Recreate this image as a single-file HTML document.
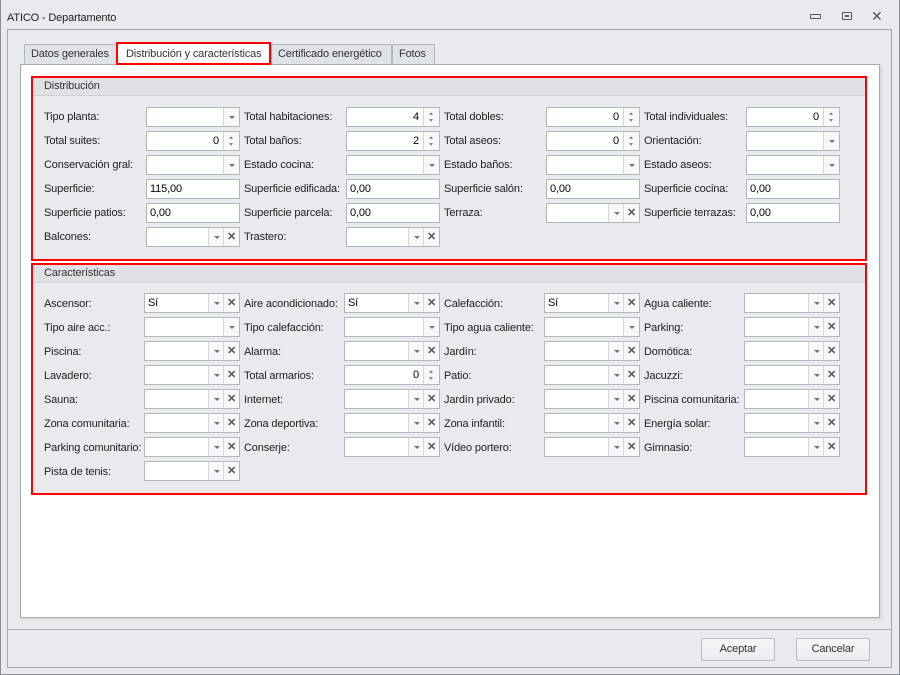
<!DOCTYPE html><html><head><meta charset="utf-8"><style>
*{box-sizing:border-box;margin:0;padding:0}
body{width:900px;height:675px;position:relative;background:#e8eaee;font-family:"Liberation Sans",Tahoma,sans-serif;font-size:11px;letter-spacing:-0.15px;color:#222;overflow:hidden}
.a{position:absolute}
.win{left:0;top:0;width:900px;height:675px;border:1px solid #8a8e94;border-top:0}
.l{position:absolute;white-space:nowrap;line-height:14px}
.f{position:absolute;height:20px;border:1px solid #b3b6bb;background:#fff;width:94px}
.v{position:absolute;left:0;top:0;line-height:18px;padding:0 3px;font-size:11px;color:#000}
.r{right:17px;left:auto;text-align:right}
.b{position:absolute;top:0;height:18px;width:16px;border-left:1px solid #d5d7db;background:#f7f8f9}
.dn::after{content:"";position:absolute;left:5px;top:8px;border-left:3px solid transparent;border-right:3px solid transparent;border-top:3px solid #777}
.sp::before{content:"";position:absolute;left:5px;top:4px;border-left:2.5px solid transparent;border-right:2.5px solid transparent;border-bottom:3px solid #888}
.sp::after{content:"";position:absolute;left:5px;top:11px;border-left:2.5px solid transparent;border-right:2.5px solid transparent;border-top:3px solid #888}
.x{font-size:11px;font-weight:bold;font-style:normal;color:#555;text-align:center;line-height:18px}
.grp{position:absolute;left:31px;width:836px;border:2px solid #f00;background:#e8eaee}
.gh{height:18px;background:#dfe1e5;border-bottom:1px solid #cfd2d6;padding-left:11px;line-height:17px;color:#333}
.tab{position:absolute;top:44px;height:20px;border:1px solid #b3b6bb;border-bottom:0;background:#dfe2e7;line-height:19px;padding:0 6px;color:#333;white-space:nowrap;overflow:hidden}
.btn{position:absolute;top:638px;width:74px;height:23px;border:1px solid #b9bcc1;border-radius:2px;background:linear-gradient(#f6f7f8,#e9ebee);text-align:center;line-height:21px;color:#333}
</style></head><body>
<div class="a win"></div>
<div class="l" style="left:7px;top:11px;color:#222">ATICO - Departamento</div>
<div class="a" style="left:810px;top:14px;width:11px;height:5px;border:1px solid #555;border-radius:1px"></div>
<div class="a" style="left:842px;top:12px;width:10px;height:8px;border:1px solid #555;border-radius:1px"><div class="a" style="left:2px;top:2px;width:4px;height:2px;border:1px solid #555"></div></div>
<div class="a" style="left:871px;top:8px;font-size:14px;color:#555">✕</div>
<div class="a" style="left:7px;top:29px;width:885px;height:639px;border:1px solid #a3a7ad"></div>
<div class="a" style="left:8px;top:629px;width:883px;height:1px;background:#a9adb3"></div>
<div class="a" style="left:20px;top:64px;width:860px;height:554px;background:#fff;border:1px solid #a7abb1;box-shadow:2px 2px 3px rgba(0,0,0,.08)"></div>
<div class="tab" style="left:24px;width:93px">Datos generales</div>
<div class="tab" style="left:116px;top:42px;height:23px;width:155px;background:#fff;border:2px solid #f00;line-height:20px;padding:0 8px">Distribución y características</div>
<div class="tab" style="left:271px;width:121px">Certificado energético</div>
<div class="tab" style="left:392px;width:43px">Fotos</div>

<div class="grp" style="top:76px;height:185px"><div class="gh">Distribución</div></div>
<div class="grp" style="top:263px;height:232px"><div class="gh">Características</div></div>

<div class="l" style="left:44px;top:110px">Tipo planta:</div>
<div class="f" style="left:146px;top:107px"><i class="b dn" style="right:0"></i></div>
<div class="l" style="left:244px;top:110px">Total habitaciones:</div>
<div class="f" style="left:346px;top:107px"><span class="v r">4</span><i class="b sp" style="right:0"></i></div>
<div class="l" style="left:444px;top:110px">Total dobles:</div>
<div class="f" style="left:546px;top:107px"><span class="v r">0</span><i class="b sp" style="right:0"></i></div>
<div class="l" style="left:644px;top:110px">Total individuales:</div>
<div class="f" style="left:746px;top:107px"><span class="v r">0</span><i class="b sp" style="right:0"></i></div>

<div class="l" style="left:44px;top:134px">Total suites:</div>
<div class="f" style="left:146px;top:131px"><span class="v r">0</span><i class="b sp" style="right:0"></i></div>
<div class="l" style="left:244px;top:134px">Total baños:</div>
<div class="f" style="left:346px;top:131px"><span class="v r">2</span><i class="b sp" style="right:0"></i></div>
<div class="l" style="left:444px;top:134px">Total aseos:</div>
<div class="f" style="left:546px;top:131px"><span class="v r">0</span><i class="b sp" style="right:0"></i></div>
<div class="l" style="left:644px;top:134px">Orientación:</div>
<div class="f" style="left:746px;top:131px"><i class="b dn" style="right:0"></i></div>

<div class="l" style="left:44px;top:158px">Conservación gral:</div>
<div class="f" style="left:146px;top:155px"><i class="b dn" style="right:0"></i></div>
<div class="l" style="left:244px;top:158px">Estado cocina:</div>
<div class="f" style="left:346px;top:155px"><i class="b dn" style="right:0"></i></div>
<div class="l" style="left:444px;top:158px">Estado baños:</div>
<div class="f" style="left:546px;top:155px"><i class="b dn" style="right:0"></i></div>
<div class="l" style="left:644px;top:158px">Estado aseos:</div>
<div class="f" style="left:746px;top:155px"><i class="b dn" style="right:0"></i></div>

<div class="l" style="left:44px;top:182px">Superficie:</div>
<div class="f" style="left:146px;top:179px"><span class="v">115,00</span></div>
<div class="l" style="left:244px;top:182px">Superficie edificada:</div>
<div class="f" style="left:346px;top:179px"><span class="v">0,00</span></div>
<div class="l" style="left:444px;top:182px">Superficie salón:</div>
<div class="f" style="left:546px;top:179px"><span class="v">0,00</span></div>
<div class="l" style="left:644px;top:182px">Superficie cocina:</div>
<div class="f" style="left:746px;top:179px"><span class="v">0,00</span></div>

<div class="l" style="left:44px;top:206px">Superficie patios:</div>
<div class="f" style="left:146px;top:203px"><span class="v">0,00</span></div>
<div class="l" style="left:244px;top:206px">Superficie parcela:</div>
<div class="f" style="left:346px;top:203px"><span class="v">0,00</span></div>
<div class="l" style="left:444px;top:206px">Terraza:</div>
<div class="f" style="left:546px;top:203px"><i class="b dn" style="right:16px;width:15px"></i><i class="b x" style="right:0">✕</i></div>
<div class="l" style="left:644px;top:206px">Superficie terrazas:</div>
<div class="f" style="left:746px;top:203px"><span class="v">0,00</span></div>

<div class="l" style="left:44px;top:230px">Balcones:</div>
<div class="f" style="left:146px;top:227px"><i class="b dn" style="right:16px;width:15px"></i><i class="b x" style="right:0">✕</i></div>
<div class="l" style="left:244px;top:230px">Trastero:</div>
<div class="f" style="left:346px;top:227px"><i class="b dn" style="right:16px;width:15px"></i><i class="b x" style="right:0">✕</i></div>

<div class="l" style="left:44px;top:297px">Ascensor:</div>
<div class="f" style="left:144px;top:293px;width:96px"><span class="v">Sí</span><i class="b dn" style="right:16px;width:15px"></i><i class="b x" style="right:0">✕</i></div>
<div class="l" style="left:244px;top:297px">Aire acondicionado:</div>
<div class="f" style="left:344px;top:293px;width:96px"><span class="v">Sí</span><i class="b dn" style="right:16px;width:15px"></i><i class="b x" style="right:0">✕</i></div>
<div class="l" style="left:444px;top:297px">Calefacción:</div>
<div class="f" style="left:544px;top:293px;width:96px"><span class="v">Sí</span><i class="b dn" style="right:16px;width:15px"></i><i class="b x" style="right:0">✕</i></div>
<div class="l" style="left:644px;top:297px">Agua caliente:</div>
<div class="f" style="left:744px;top:293px;width:96px"><i class="b dn" style="right:16px;width:15px"></i><i class="b x" style="right:0">✕</i></div>

<div class="l" style="left:44px;top:321px">Tipo aire acc.:</div>
<div class="f" style="left:144px;top:317px;width:96px"><i class="b dn" style="right:0"></i></div>
<div class="l" style="left:244px;top:321px">Tipo calefacción:</div>
<div class="f" style="left:344px;top:317px;width:96px"><i class="b dn" style="right:0"></i></div>
<div class="l" style="left:444px;top:321px">Tipo agua caliente:</div>
<div class="f" style="left:544px;top:317px;width:96px"><i class="b dn" style="right:0"></i></div>
<div class="l" style="left:644px;top:321px">Parking:</div>
<div class="f" style="left:744px;top:317px;width:96px"><i class="b dn" style="right:16px;width:15px"></i><i class="b x" style="right:0">✕</i></div>

<div class="l" style="left:44px;top:345px">Piscina:</div>
<div class="f" style="left:144px;top:341px;width:96px"><i class="b dn" style="right:16px;width:15px"></i><i class="b x" style="right:0">✕</i></div>
<div class="l" style="left:244px;top:345px">Alarma:</div>
<div class="f" style="left:344px;top:341px;width:96px"><i class="b dn" style="right:16px;width:15px"></i><i class="b x" style="right:0">✕</i></div>
<div class="l" style="left:444px;top:345px">Jardín:</div>
<div class="f" style="left:544px;top:341px;width:96px"><i class="b dn" style="right:16px;width:15px"></i><i class="b x" style="right:0">✕</i></div>
<div class="l" style="left:644px;top:345px">Domótica:</div>
<div class="f" style="left:744px;top:341px;width:96px"><i class="b dn" style="right:16px;width:15px"></i><i class="b x" style="right:0">✕</i></div>

<div class="l" style="left:44px;top:369px">Lavadero:</div>
<div class="f" style="left:144px;top:365px;width:96px"><i class="b dn" style="right:16px;width:15px"></i><i class="b x" style="right:0">✕</i></div>
<div class="l" style="left:244px;top:369px">Total armarios:</div>
<div class="f" style="left:344px;top:365px;width:96px"><span class="v r">0</span><i class="b sp" style="right:0"></i></div>
<div class="l" style="left:444px;top:369px">Patio:</div>
<div class="f" style="left:544px;top:365px;width:96px"><i class="b dn" style="right:16px;width:15px"></i><i class="b x" style="right:0">✕</i></div>
<div class="l" style="left:644px;top:369px">Jacuzzi:</div>
<div class="f" style="left:744px;top:365px;width:96px"><i class="b dn" style="right:16px;width:15px"></i><i class="b x" style="right:0">✕</i></div>

<div class="l" style="left:44px;top:393px">Sauna:</div>
<div class="f" style="left:144px;top:389px;width:96px"><i class="b dn" style="right:16px;width:15px"></i><i class="b x" style="right:0">✕</i></div>
<div class="l" style="left:244px;top:393px">Internet:</div>
<div class="f" style="left:344px;top:389px;width:96px"><i class="b dn" style="right:16px;width:15px"></i><i class="b x" style="right:0">✕</i></div>
<div class="l" style="left:444px;top:393px">Jardín privado:</div>
<div class="f" style="left:544px;top:389px;width:96px"><i class="b dn" style="right:16px;width:15px"></i><i class="b x" style="right:0">✕</i></div>
<div class="l" style="left:644px;top:393px">Piscina comunitaria:</div>
<div class="f" style="left:744px;top:389px;width:96px"><i class="b dn" style="right:16px;width:15px"></i><i class="b x" style="right:0">✕</i></div>

<div class="l" style="left:44px;top:417px">Zona comunitaria:</div>
<div class="f" style="left:144px;top:413px;width:96px"><i class="b dn" style="right:16px;width:15px"></i><i class="b x" style="right:0">✕</i></div>
<div class="l" style="left:244px;top:417px">Zona deportiva:</div>
<div class="f" style="left:344px;top:413px;width:96px"><i class="b dn" style="right:16px;width:15px"></i><i class="b x" style="right:0">✕</i></div>
<div class="l" style="left:444px;top:417px">Zona infantil:</div>
<div class="f" style="left:544px;top:413px;width:96px"><i class="b dn" style="right:16px;width:15px"></i><i class="b x" style="right:0">✕</i></div>
<div class="l" style="left:644px;top:417px">Energía solar:</div>
<div class="f" style="left:744px;top:413px;width:96px"><i class="b dn" style="right:16px;width:15px"></i><i class="b x" style="right:0">✕</i></div>

<div class="l" style="left:44px;top:441px">Parking comunitario:</div>
<div class="f" style="left:144px;top:437px;width:96px"><i class="b dn" style="right:16px;width:15px"></i><i class="b x" style="right:0">✕</i></div>
<div class="l" style="left:244px;top:441px">Conserje:</div>
<div class="f" style="left:344px;top:437px;width:96px"><i class="b dn" style="right:16px;width:15px"></i><i class="b x" style="right:0">✕</i></div>
<div class="l" style="left:444px;top:441px">Vídeo portero:</div>
<div class="f" style="left:544px;top:437px;width:96px"><i class="b dn" style="right:16px;width:15px"></i><i class="b x" style="right:0">✕</i></div>
<div class="l" style="left:644px;top:441px">Gimnasio:</div>
<div class="f" style="left:744px;top:437px;width:96px"><i class="b dn" style="right:16px;width:15px"></i><i class="b x" style="right:0">✕</i></div>

<div class="l" style="left:44px;top:465px">Pista de tenis:</div>
<div class="f" style="left:144px;top:461px;width:96px"><i class="b dn" style="right:16px;width:15px"></i><i class="b x" style="right:0">✕</i></div>

<div class="btn" style="left:701px">Aceptar</div>
<div class="btn" style="left:796px">Cancelar</div>
</body></html>
